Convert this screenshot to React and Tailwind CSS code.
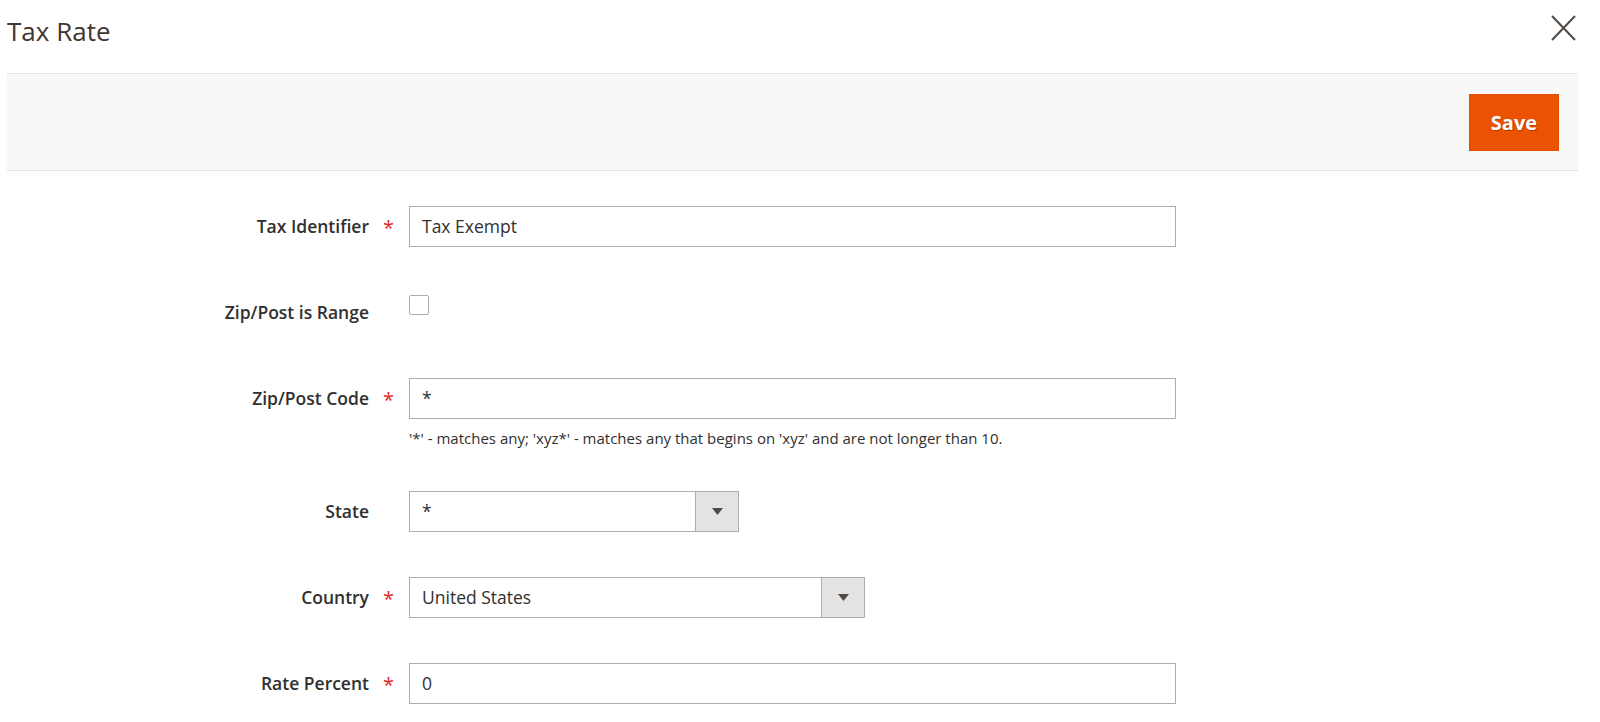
import React from "react";

function Label({ text, required }) {
  return (
    <>
      <div className="w-[369px] shrink-0 text-right text-[17.5px] leading-[41px] font-semibold text-[#303030]">
        {text}
      </div>
      <div className="w-[40px] shrink-0 pl-[14px] pt-[12px]">
        {required ? (
          <span className="block text-[20px] leading-[20px] text-[#e22626]">*</span>
        ) : null}
      </div>
    </>
  );
}

function TextInput({ value, width = "w-[767px]" }) {
  return (
    <div
      className={`${width} h-[41px] border border-[#adadad] bg-white pl-[12px] text-[17.5px] leading-[39px] text-[#303030]`}
    >
      {value}
    </div>
  );
}

function Select({ value, width }) {
  return (
    <div className={`${width} h-[41px] flex border border-[#adadad] bg-white`}>
      <div className="flex-1 pl-[12px] text-[17.5px] leading-[39px] text-[#303030]">{value}</div>
      <div className="w-[43px] border-l border-[#adadad] bg-[#e3e3e3] flex items-center justify-center">
        <svg width="11" height="7" viewBox="0 0 11 7">
          <path d="M0 0 L11 0 L5.5 7 Z" fill="#514943" />
        </svg>
      </div>
    </div>
  );
}

export default function App() {
  return (
    <div className="w-[1600px] h-[722px] overflow-hidden bg-white font-['Open_Sans',sans-serif] text-[#303030]">
      <div className="pl-[7px] pr-[22px]">
        <div className="h-[73px] flex items-start justify-between">
          <h1 className="pt-[15px] text-[26px] leading-[32px] font-normal text-[#41362f]">Tax Rate</h1>
          <button className="mt-[15px] mr-[2px] w-[25px] h-[26px]" aria-label="Close">
            <svg width="25" height="26" viewBox="0 0 25 26">
              <path d="M1 1 L24 25 M24 1 L1 25" stroke="#514943" strokeWidth="2" fill="none" />
            </svg>
          </button>
        </div>
        <div className="h-[98px] border-y border-[#e3e3e3] bg-[#f8f8f8] flex justify-end pt-[20px] pr-[19px]">
          <button className="w-[90px] h-[57px] bg-[#eb5202] border border-[#e04f02] text-white text-[20px] font-bold [text-shadow:1px_1px_1px_rgba(0,0,0,0.25)]">
            Save
          </button>
        </div>
      </div>

      <div className="pt-[35px] flex flex-col gap-[45px]">
        <div className="flex items-start">
          <Label text="Tax Identifier" required />
          <TextInput value="Tax Exempt" />
        </div>

        <div className="flex items-start">
          <Label text="Zip/Post is Range" />
          <div className="mt-[3px] w-[20px] h-[20px] rounded-[2px] border border-[#adadad] bg-white" />
        </div>

        <div className="flex items-start">
          <Label text="Zip/Post Code" required />
          <div className="flex flex-col">
            <TextInput value="*" />
            <div className="mt-[11px] text-[15px] leading-[16px] text-[#303030]">
              '*' - matches any; 'xyz*' - matches any that begins on 'xyz' and are not longer than 10.
            </div>
          </div>
        </div>

        <div className="flex items-start">
          <Label text="State" />
          <Select value="*" width="w-[330px]" />
        </div>

        <div className="flex items-start">
          <Label text="Country" required />
          <Select value="United States" width="w-[456px]" />
        </div>

        <div className="flex items-start">
          <Label text="Rate Percent" required />
          <TextInput value="0" />
        </div>
      </div>
    </div>
  );
}
